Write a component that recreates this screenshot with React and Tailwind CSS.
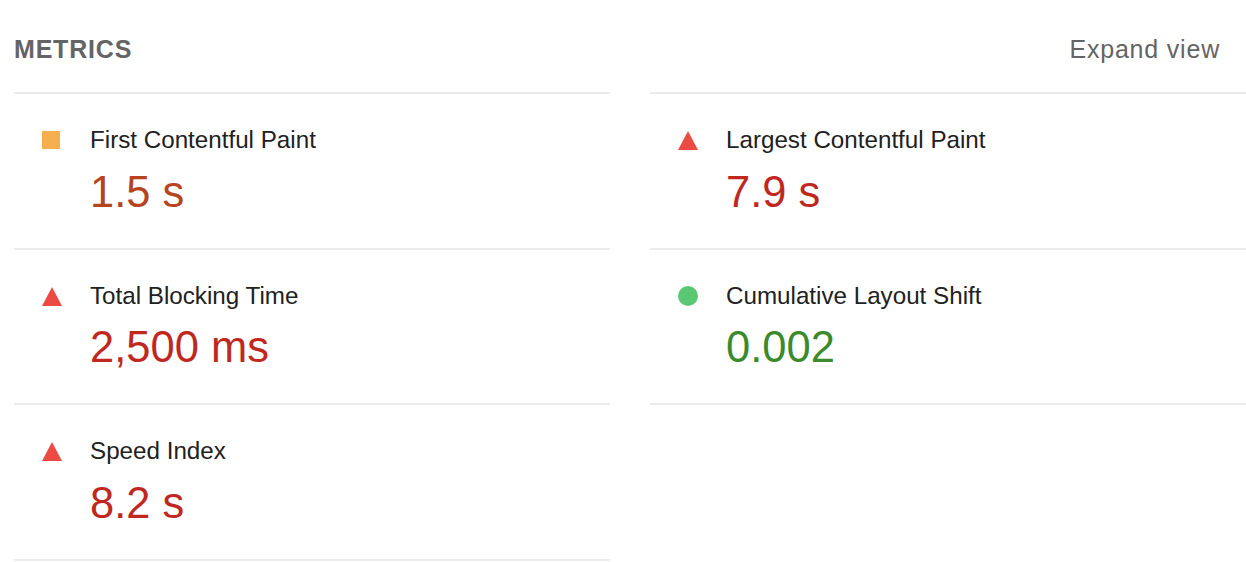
const metrics = [
  { title: "First Contentful Paint", value: "1.5 s", status: "average" },
  { title: "Largest Contentful Paint", value: "7.9 s", status: "fail" },
  { title: "Total Blocking Time", value: "2,500 ms", status: "fail" },
  { title: "Cumulative Layout Shift", value: "0.002", status: "pass" },
  { title: "Speed Index", value: "8.2 s", status: "fail" },
];

const valueColor = {
  average: "text-[#b5441f]",
  fail: "text-[#c0281f]",
  pass: "text-[#3b8a2c]",
};

function StatusIcon({ status }) {
  if (status === "average") {
    return <div className="mt-[9px] w-[18px] h-[18px] bg-[#f4af4f]" />;
  }
  if (status === "pass") {
    return <div className="mt-[8px] w-[20px] h-[20px] rounded-full bg-[#5ac872]" />;
  }
  return (
    <svg className="mt-[9px]" width="20" height="19" viewBox="0 0 20 19">
      <polygon points="10,0 20,19 0,19" fill="#eb4b42" />
    </svg>
  );
}

function Metric({ title, value, status, first }) {
  return (
    <div
      className={`flex pt-[28px] pb-[30px] border-b-2 border-[#ebebeb] ${
        first ? "border-t-2" : ""
      }`}
    >
      {/* icon column */}
      <div className="ml-[28px] w-[48px] shrink-0">
        <StatusIcon status={status} />
      </div>
      <div className="flex flex-col">
        <div className="text-[24.2px] leading-[36px] text-[#212121]">{title}</div>
        <div className={`mt-[7.5px] text-[43.5px] leading-[52px] ${valueColor[status]}`}>
          {value}
        </div>
      </div>
    </div>
  );
}

export default function App() {
  return (
    <div
      className="w-[1246px] h-[562px] bg-white pl-[14px] overflow-hidden"
      style={{ fontFamily: '"Liberation Sans", Arial, sans-serif' }}
    >
      {/* Header */}
      <div className="flex justify-between h-[92px] pt-[31px] pr-[26px] text-[25px] leading-[36px] tracking-[0.8px] text-[#646464]">
        <span className="font-semibold">METRICS</span>
        <span>Expand view</span>
      </div>

      {/* Metrics grid */}
      <div className="grid grid-cols-2 gap-x-[40px] items-start">
        {metrics.map((m, i) => (
          <Metric key={m.title} {...m} first={i < 2} />
        ))}
      </div>
    </div>
  );
}
